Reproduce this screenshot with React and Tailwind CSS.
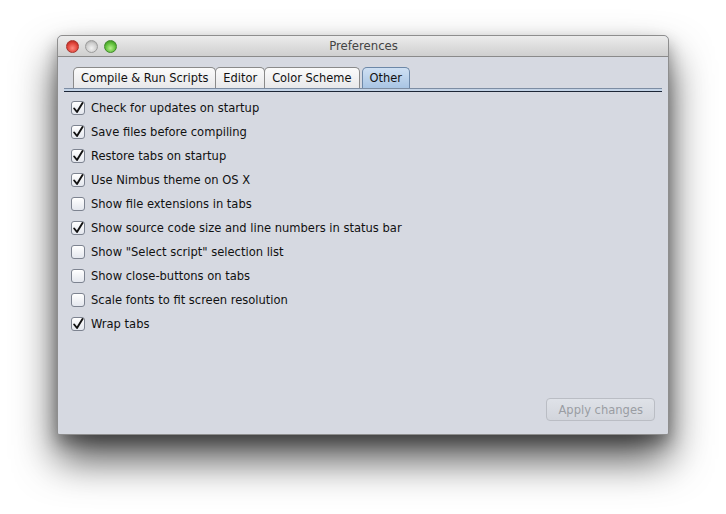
import { useState } from 'react';

const options = [
  { label: 'Check for updates on startup', on: true },
  { label: 'Save files before compiling', on: true },
  { label: 'Restore tabs on startup', on: true },
  { label: 'Use Nimbus theme on OS X', on: true },
  { label: 'Show file extensions in tabs', on: false },
  { label: 'Show source code size and line numbers in status bar', on: true },
  { label: 'Show "Select script" selection list', on: false },
  { label: 'Show close-buttons on tabs', on: false },
  { label: 'Scale fonts to fit screen resolution', on: false },
  { label: 'Wrap tabs', on: true },
];

const tabs = ['Compile & Run Scripts', 'Editor', 'Color Scheme', 'Other'];

function Light({ color }) {
  const fills = {
    red: 'bg-[radial-gradient(circle_at_50%_65%,#ff8a80_0%,#e0443a_55%,#9e1a14_100%)] border-[#a8332c]',
    gray: 'bg-[radial-gradient(circle_at_50%_65%,#f2f2f2_0%,#cfcfcf_55%,#9a9a9a_100%)] border-[#9c9c9c]',
    green: 'bg-[radial-gradient(circle_at_50%_65%,#b6f08c_0%,#5fbf3a_55%,#2f7d18_100%)] border-[#3f8a2a]',
  };
  return <div className={`w-[13px] h-[13px] rounded-full border ${fills[color]}`} />;
}

function Check({ on }) {
  return (
    <div className="w-[14px] h-[14px] rounded-[3px] border border-[#7d8390] bg-gradient-to-b from-[#ffffff] to-[#e4e7ee] flex items-center justify-center shadow-[inset_0_1px_0_#fff]">
      {on && (
        <svg width="12" height="12" viewBox="0 0 12 12">
          <path d="M2.2 6.5 L5 10 L10.5 1" fill="none" stroke="#111" strokeWidth="1.9" strokeLinecap="round" strokeLinejoin="round" />
        </svg>
      )}
    </div>
  );
}

export default function App() {
  const [items, setItems] = useState(options);
  const font = { fontFamily: '"DejaVu Sans Condensed", "DejaVu Sans", sans-serif' };

  return (
    <div className="w-[726px] h-[514px] bg-white pl-[57px] pt-[35px]" style={font}>
      <div className="w-[612px] h-[400px] flex flex-col rounded-t-[5px] rounded-b-[2px] bg-[#d6d9e1] border border-[#8e8e8e] shadow-[0_24px_42px_rgba(0,0,0,0.7),0_8px_16px_rgba(0,0,0,0.3)]">
        <div className="relative h-[21px] flex items-center rounded-t-[5px] bg-gradient-to-b from-[#ececec] to-[#cfcfcf] border-b border-[#8a8a8a]">
          <div className="flex gap-[6px] pl-[8px]">
            <Light color="red" />
            <Light color="gray" />
            <Light color="green" />
          </div>
          <div className="absolute inset-0 flex items-center justify-center text-[13px] text-[#444] pl-[1px]">
            Preferences
          </div>
        </div>

        <div className="px-[6px] pt-[10px]">
          <div className="flex pl-[9px] h-[21px] items-end">
            {tabs.map((t) => {
              const sel = t === 'Other';
              return (
                <div
                  key={t}
                  className={`h-[21px] px-[7px] flex items-center text-[12.7px] text-[#111] border border-b-0 rounded-t-[5px] ${
                    sel
                      ? 'bg-gradient-to-b from-[#cfe0f3] to-[#a9c5e4] border-[#6d88a8] ml-[2px]'
                      : 'bg-gradient-to-b from-[#fbfbfb] to-[#e8e8ea] border-[#8a8a8a] -ml-px first:ml-0'
                  }`}
                >
                  {t}
                </div>
              );
            })}
          </div>
          <div className="h-[3px] bg-[#c3d3e6] border-t border-[#7d8da3]" />
          <div className="h-[1px] bg-[#1d2636]" />
        </div>

        <div className="flex flex-col pl-[13px] pt-[4px]">
          {items.map((o, i) => (
            <label
              key={o.label}
              className="h-[24px] flex items-center gap-[6px] text-[12.8px] text-[#111] cursor-default"
              onClick={() => setItems(items.map((x, j) => (j === i ? { ...x, on: !x.on } : x)))}
            >
              <Check on={o.on} />
              <span>{o.label}</span>
            </label>
          ))}
        </div>

        <div className="flex-1" />
        <div className="flex justify-end pr-[13px] pb-[13px]">
          <div className="h-[23px] px-[11px] flex items-center rounded-[4px] border border-[#babdc4] bg-gradient-to-b from-[#dfe2e8] to-[#d2d5dc] text-[12.8px] text-[#9a9da3]">
            Apply changes
          </div>
        </div>
      </div>
    </div>
  );
}
